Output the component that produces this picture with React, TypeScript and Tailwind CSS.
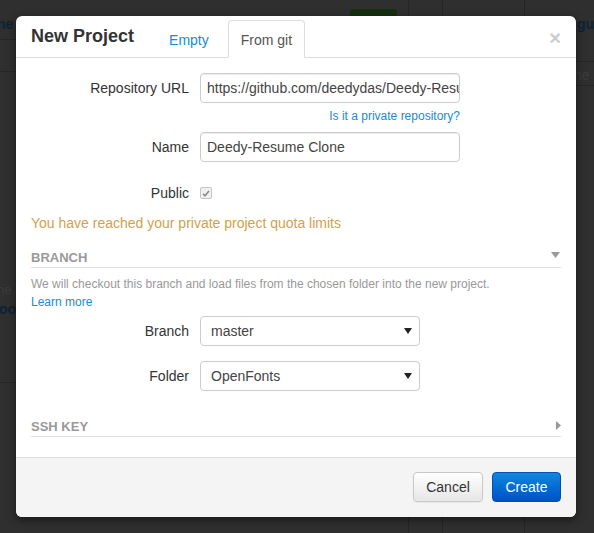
import React from "react";

const label = "w-[158px] shrink-0 text-right text-[14px] text-[#333]";

function Caret() {
  return (
    <svg width="8" height="6" viewBox="0 0 8 6" className="shrink-0">
      <path d="M0 0h8L4 6z" fill="#222" />
    </svg>
  );
}

function FakeSelect({ value }: { value: string }) {
  return (
    <div className="flex h-[30px] w-[220px] items-center justify-between rounded-[4px] border border-[#ccc] bg-white pl-[10px] pr-[7px] text-[14px] text-[#444]">
      <span>{value}</span>
      <Caret />
    </div>
  );
}

function SectionHeader({ title, open }: { title: string; open: boolean }) {
  return (
    <div className="flex h-[19px] items-center justify-between border-b border-[#ddd]">
      <span className="text-[13px] font-bold text-[#999]">{title}</span>
      {open ? (
        <svg width="9" height="6" viewBox="0 0 9 6" className="mb-[6px] mr-[1px]">
          <path d="M0 0h9L4.5 6z" fill="#999" />
        </svg>
      ) : (
        <svg width="5" height="9" viewBox="0 0 5 9" className="mb-[4px]">
          <path d="M0 0l5 4.5L0 9z" fill="#999" />
        </svg>
      )}
    </div>
  );
}

function Backdrop() {
  return (
    <div className="flex h-full">
      <div className="w-[411px] border-r border-[#262626]">
        <div className="flex h-[40px] items-start justify-between border-b border-[#262626]">
          <span className="-ml-[3px] mt-[14px] text-[14px] font-bold text-[#0d2236]">ne</span>
          <div className="mr-[11px] mt-[9px] h-[24px] w-[47px] rounded-[3px] bg-[#15300f]" />
        </div>
        <div className="h-[32px] border-b border-[#262626]" />
        <div className="flex h-[311px] flex-col justify-end border-b border-[#262626] pb-[62px]">
          <span className="-ml-[3px] text-[13px] text-[#3c3c3c]">he.</span>
          <span className="-ml-[1px] text-[14px] font-bold text-[#0d2236]">oo</span>
        </div>
      </div>
      <div className="w-[34px] border-r border-[#262626]" />
      <div className="w-[82px] border-r border-[#262626]" />
      <div className="flex-1">
        <div className="h-[62px] border-b border-[#262626] pl-[48px] pt-[14px] text-[14px] font-bold text-[#0d2236]">igu</div>
        <div className="h-[24px] border-b border-[#262626] pl-[45px] pt-[3px] text-[14px] text-[#3c3c3c]">the</div>
      </div>
    </div>
  );
}

export default function App() {
  return (
    <div className="relative h-[533px] w-full overflow-hidden bg-[#2f2f2f] font-['Liberation_Sans',Arial,sans-serif]">
      <Backdrop />

      {/* modal dialog */}
      <div className="absolute left-[16px] top-[16px] w-[560px] overflow-hidden rounded-[6px] bg-white shadow-[0_3px_9px_rgba(0,0,0,0.5)]">
        <div className="flex h-[42px] items-end border-b border-[#ddd] px-[15px]">
          <h3 className="self-center text-[18px] font-bold text-[#333]">New Project</h3>
          <div className="-mb-px ml-[22px] flex h-[38px] items-center px-[13px] pt-[3px] text-[14px] text-[#1a8ad6]">Empty</div>
          <div className="-mb-px ml-[6px] flex h-[38px] items-center rounded-t-[4px] border border-[#ddd] border-b-white bg-white px-[12px] pt-[3px] text-[14px] text-[#555]">From git</div>
          <span className="ml-auto self-center pt-[2px] text-[20px] font-bold leading-none text-[#ccc]">×</span>
        </div>

        <div className="px-[15px] pb-[20px] pt-[15px]">
          <div className="flex items-center">
            <span className={label}>Repository URL</span>
            <div className="ml-[11px] flex h-[30px] w-[260px] items-center overflow-hidden whitespace-nowrap rounded-[4px] border border-[#ccc] px-[6px] text-[14px] text-[#444] shadow-[inset_0_1px_1px_rgba(0,0,0,0.075)]">
              https://github.com/deedydas/Deedy-Resume
            </div>
          </div>
          <div className="mb-[7px] mt-[5px] flex w-[429px] justify-end text-[12px] leading-[17px] text-[#1a8ad6]">Is it a private repository?</div>

          <div className="flex items-center">
            <span className={label}>Name</span>
            <div className="ml-[11px] flex h-[30px] w-[260px] items-center rounded-[4px] border border-[#ccc] px-[6px] text-[14px] text-[#444] shadow-[inset_0_1px_1px_rgba(0,0,0,0.075)]">
              Deedy-Resume Clone
            </div>
          </div>

          <div className="mt-[21px] flex h-[20px] items-center">
            <span className={label}>Public</span>
            <span className="ml-[11px] flex h-[12px] w-[12px] items-center justify-center rounded-[2px] border border-[#c4c4c4] bg-[#f0f0f0]">
              <svg width="8" height="7" viewBox="0 0 8 7">
                <path d="M1 3.8l2 2L7 1" fill="none" stroke="#8a8a8a" strokeWidth="1.6" />
              </svg>
            </span>
          </div>

          <p className="mt-[10px] text-[14px] leading-[20px] text-[#d39f4e]">You have reached your private project quota limits</p>

          <div className="mt-[16px]">
            <SectionHeader title="BRANCH" open />
          </div>
          <p className="mt-[7px] text-[12px] leading-[18px] text-[#999]">
            We will checkout this branch and load files from the chosen folder into the new project.
          </p>
          <p className="text-[12px] leading-[18px] text-[#1a8ad6]">Learn more</p>

          <div className="mt-[5px] flex items-center">
            <span className={label}>Branch</span>
            <div className="ml-[11px]">
              <FakeSelect value="master" />
            </div>
          </div>
          <div className="mt-[15px] flex items-center">
            <span className={label}>Folder</span>
            <div className="ml-[11px]">
              <FakeSelect value="OpenFonts" />
            </div>
          </div>

          <div className="mt-[27px]">
            <SectionHeader title="SSH KEY" open={false} />
          </div>
        </div>

        <div className="flex justify-end gap-[9px] border-t border-[#ddd] bg-[#f4f4f4] px-[15px] pb-[15px] pt-[14px]">
          <button className="h-[30px] w-[70px] rounded-[4px] border border-[#c8c8c8] bg-gradient-to-b from-white to-[#e6e6e6] text-[14px] text-[#333] shadow-[0_1px_1px_rgba(0,0,0,0.05)]">
            Cancel
          </button>
          <button className="h-[30px] w-[69px] rounded-[4px] border border-[#0050b8] bg-gradient-to-b from-[#1487dc] to-[#0050c8] text-[14px] text-white">
            Create
          </button>
        </div>
      </div>
    </div>
  );
}
